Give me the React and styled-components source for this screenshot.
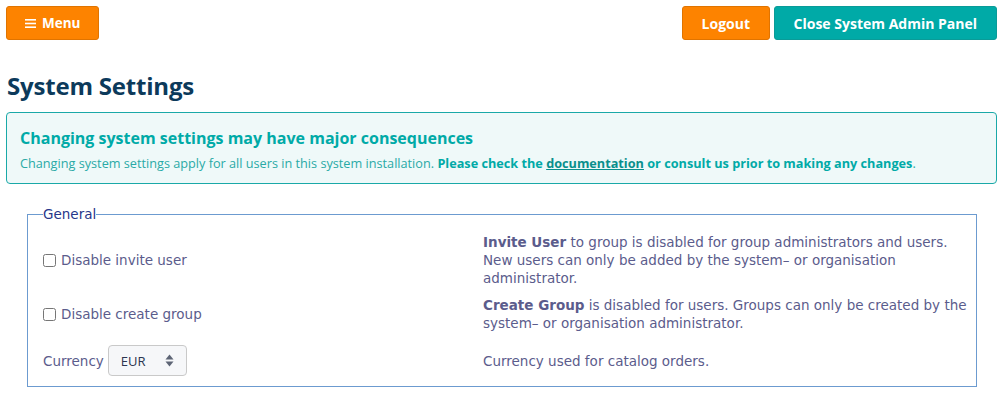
import React from "react";
import styled, { createGlobalStyle } from "styled-components";

const Global = createGlobalStyle`
  body {
    margin: 0;
    background: #ffffff;
    font-family: "Open Sans", "Liberation Sans", sans-serif;
  }
`;

const Colors = {
  Laranja: "#fd8300",
  Teal: "#00aaa7",
  Navy: "#0c3a5b",
  Texto: "#5b5c8c",
  Borda: "#6c9bd0",
};

const Pagina = styled.div`
  padding: 6px 3px 0 6px;
`;

const TopBar = styled.div`
  display: flex;
  justify-content: space-between;
  align-items: center;
`;

const Acoes = styled.div`
  display: flex;
  gap: 4px;
`;

const Botao = styled.button`
  display: flex;
  align-items: center;
  gap: 6px;
  height: 34px;
  padding: 0 ${(p) => p.$px || 20}px;
  border: 1px solid ${(p) => (p.$teal ? "#0a9b98" : "#e07400")};
  border-radius: 3px;
  background: ${(p) => (p.$teal ? Colors.Teal : Colors.Laranja)};
  color: #fff;
  font-family: "Open Sans", sans-serif;
  font-weight: 700;
  font-size: ${(p) => p.$fs || 14}px;
  cursor: pointer;
`;

const Titulo = styled.h1`
  margin: 29px 0 10px 1px;
  font-size: 24px;
  font-weight: 700;
  color: ${Colors.Navy};
  letter-spacing: -0.2px;
`;

const Alerta = styled.div`
  border: 1px solid #1aa9a8;
  border-radius: 4px;
  background: #eff9f9;
  padding: 14px 13px 11px;
`;

const AlertaTitulo = styled.div`
  font-size: 16px;
  font-weight: 700;
  color: ${Colors.Teal};
  margin-bottom: 5px;
`;

const AlertaTexto = styled.div`
  font-size: 12.7px;
  color: #2aaaa6;
  b {
    font-weight: 700;
    color: ${Colors.Teal};
  }
  a {
    color: #0a8f8c;
    font-weight: 700;
    text-decoration: underline;
  }
`;

const Fieldset = styled.fieldset`
  margin: 22px 20px 0 21px;
  padding: 4px 4px 10px 15px;
  border: 1px solid ${Colors.Borda};
  font-family: "DejaVu Sans", Verdana, sans-serif;
  font-size: 13.5px;
  color: ${Colors.Texto};
`;

const Legend = styled.legend`
  padding: 0;
  color: #27368a;
  font-size: 13.5px;
`;

const Linha = styled.div`
  display: grid;
  grid-template-columns: 440px 1fr;
  align-items: center;
  padding: ${(p) => p.$pad || "0"};
  line-height: 18px;
`;

const CheckLabel = styled.label`
  display: flex;
  align-items: center;
  gap: 5px;
  input {
    margin: 0;
    width: 13px;
    height: 13px;
  }
`;

const Descricao = styled.div`
  b {
    font-weight: 700;
  }
`;

const Moeda = styled.div`
  display: flex;
  align-items: center;
  gap: 4px;
`;

const Select = styled.div`
  display: flex;
  align-items: center;
  justify-content: space-between;
  width: 79px;
  height: 31px;
  box-sizing: border-box;
  padding: 0 12px 0 12px;
  border: 1px solid #c9c9c9;
  border-radius: 4px;
  background: #f6f7f9;
  color: #2b3550;
  font-family: "Open Sans", sans-serif;
  font-size: 13px;
`;

function Caret() {
  return (
    <svg width="9" height="13" viewBox="0 0 9 13">
      <path d="M4.5 0.5 L8.5 5.5 H0.5 Z" fill="#5d6475" />
      <path d="M4.5 12.5 L8.5 7.5 H0.5 Z" fill="#5d6475" />
    </svg>
  );
}

function Hamburguer() {
  return (
    <svg width="11" height="11" viewBox="0 0 11 11">
      <rect x="0" y="1" width="11" height="1.6" fill="#fff" />
      <rect x="0" y="4.7" width="11" height="1.6" fill="#fff" />
      <rect x="0" y="8.4" width="11" height="1.6" fill="#fff" />
    </svg>
  );
}

export default function App() {
  return (
    <Pagina>
      <Global />
      <TopBar>
        <Botao $px={18} $fs={13.5}>
          <Hamburguer />
          Menu
        </Botao>
        <Acoes>
          <Botao $px={18.5}>Logout</Botao>
          <Botao $teal $px={19}>Close System Admin Panel</Botao>
        </Acoes>
      </TopBar>

      <Titulo>System Settings</Titulo>

      <Alerta>
        <AlertaTitulo>Changing system settings may have major consequences</AlertaTitulo>
        <AlertaTexto>
          Changing system settings apply for all users in this system installation.{" "}
          <b>
            Please check the <a>documentation</a> or consult us prior to making any changes
          </b>
          .
        </AlertaTexto>
      </Alerta>

      <Fieldset>
        <Legend>General</Legend>
        <Linha $pad="7px 0 0">
          <CheckLabel>
            <input type="checkbox" />
            Disable invite user
          </CheckLabel>
          <Descricao>
            <b>Invite User</b> to group is disabled for group administrators and users. New users
            can only be added by the system– or organisation administrator.
          </Descricao>
        </Linha>
        <Linha $pad="9px 0 0">
          <CheckLabel>
            <input type="checkbox" />
            Disable create group
          </CheckLabel>
          <Descricao>
            <b>Create Group</b> is disabled for users. Groups can only be created by the system– or
            organisation administrator.
          </Descricao>
        </Linha>
        <Linha $pad="13px 0 0">
          <Moeda>
            Currency
            <Select>
              EUR
              <Caret />
            </Select>
          </Moeda>
          <Descricao>Currency used for catalog orders.</Descricao>
        </Linha>
      </Fieldset>
    </Pagina>
  );
}
